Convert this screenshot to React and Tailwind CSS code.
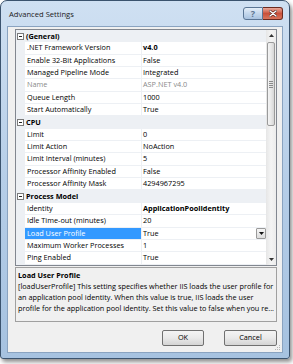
import React from 'react';

const groups = [
  {
    title: '(General)',
    rows: [
      { name: '.NET Framework Version', value: 'v4.0', bold: true },
      { name: 'Enable 32-Bit Applications', value: 'False' },
      { name: 'Managed Pipeline Mode', value: 'Integrated' },
      { name: 'Name', value: 'ASP.NET v4.0', readOnly: true },
      { name: 'Queue Length', value: '1000' },
      { name: 'Start Automatically', value: 'True' },
    ],
  },
  {
    title: 'CPU',
    rows: [
      { name: 'Limit', value: '0' },
      { name: 'Limit Action', value: 'NoAction' },
      { name: 'Limit Interval (minutes)', value: '5' },
      { name: 'Processor Affinity Enabled', value: 'False' },
      { name: 'Processor Affinity Mask', value: '4294967295' },
    ],
  },
  {
    title: 'Process Model',
    rows: [
      { name: 'Identity', value: 'ApplicationPoolIdentity', bold: true },
      { name: 'Idle Time-out (minutes)', value: '20' },
      { name: 'Load User Profile', value: 'True', selected: true },
      { name: 'Maximum Worker Processes', value: '1' },
      { name: 'Ping Enabled', value: 'True' },
    ],
  },
];

function CollapseBox() {
  return (
    <div className="flex h-[7px] w-[7px] items-center justify-center border border-[#7a7a7a] bg-white">
      <div className="h-px w-[3px] bg-[#222]" />
    </div>
  );
}

function CategoryRow({ title }) {
  return (
    <div className="flex h-[12.35px] items-center bg-[#edf0f4]">
      <div className="flex w-[9px] justify-center">
        <CollapseBox />
      </div>
      <span className="pl-[1px] font-bold text-black">{title}</span>
    </div>
  );
}

function PropertyRow({ row }) {
  const textColor = row.readOnly ? 'text-[#8a8a8a]' : 'text-black';
  return (
    <div className="flex h-[12.35px]">
      <div className="w-[9px] shrink-0 bg-[#edf0f4]" />
      <div
        className={
          row.selected
            ? 'flex w-[117px] shrink-0 items-center border-b border-r border-[#edf0f4] bg-[#3399ff] pl-[2px] text-white'
            : `flex w-[117px] shrink-0 items-center border-b border-r border-[#edf0f4] pl-[2px] ${textColor}`
        }
      >
        <span className="whitespace-nowrap">{row.name}</span>
      </div>
      <div className="flex min-w-0 flex-1 items-center border-b border-[#edf0f4] pl-[1px]">
        <span className={`whitespace-nowrap ${textColor} ${row.bold ? 'font-bold' : ''}`}>{row.value}</span>
        {row.selected && (
          <div className="ml-auto mr-[0px] flex h-[11px] w-[10px] items-center justify-center rounded-[1px] border border-[#9a9a9a] bg-gradient-to-b from-[#f6f6f6] to-[#dcdcdc]">
            <svg width="5" height="3" viewBox="0 0 5 3">
              <path d="M0 0h5L2.5 3z" fill="#111" />
            </svg>
          </div>
        )}
      </div>
    </div>
  );
}

function Scrollbar() {
  return (
    <div className="flex w-[10px] shrink-0 flex-col bg-gradient-to-r from-[#e6e6e6] via-[#f4f4f4] to-[#ececec]">
      <div className="flex h-[11px] items-center justify-center">
        <svg width="5" height="3" viewBox="0 0 5 3">
          <path d="M0 3h5L2.5 0z" fill="#333" />
        </svg>
      </div>
      <div className="flex-1">
        <div className="mx-[1px] mt-[1px] flex h-[84px] items-center justify-center rounded-[2px] border border-[#9a9a9a] bg-gradient-to-r from-[#f4f4f4] via-[#e8e8e8] to-[#d6d6d6]">
          <div className="flex flex-col gap-[1px]">
            <div className="h-px w-[4px] bg-[#8a8a8a]" />
            <div className="h-px w-[4px] bg-[#8a8a8a]" />
            <div className="h-px w-[4px] bg-[#8a8a8a]" />
            <div className="h-px w-[4px] bg-[#8a8a8a]" />
          </div>
        </div>
      </div>
      <div className="flex h-[11px] items-center justify-center">
        <svg width="5" height="3" viewBox="0 0 5 3">
          <path d="M0 0h5L2.5 3z" fill="#333" />
        </svg>
      </div>
    </div>
  );
}

function CaptionButtons() {
  return (
    <div className="mt-[6px] flex">
      <div className="flex h-[13px] w-[20px] items-center justify-center rounded-l-[3px] border border-[#5a7594] bg-gradient-to-b from-[#e4eef8] via-[#c4d7ec] to-[#a9c3e0]">
        <span className="text-[9px] leading-none font-bold text-[#5d7590]">?</span>
      </div>
      <div className="flex h-[13px] w-[20px] items-center justify-center rounded-r-[3px] border border-l-0 border-[#6b2a1f] bg-gradient-to-b from-[#e9a89a] via-[#c9503a] to-[#d8735b]">
        <svg width="8" height="7" viewBox="0 0 8 7">
          <path d="M1 1l6 5M7 1L1 6" stroke="#4a1a12" strokeWidth="2.6" strokeLinecap="round" />
          <path d="M1 1l6 5M7 1L1 6" stroke="#fff" strokeWidth="1.5" strokeLinecap="round" />
        </svg>
      </div>
    </div>
  );
}

function WinButton({ children, width }) {
  return (
    <button
      className={`flex h-[16px] ${width} items-center justify-center rounded-[2px] border border-[#707070] bg-gradient-to-b from-[#f4f4f4] via-[#e9e9e9] to-[#d4d4d4] text-black`}
    >
      {children}
    </button>
  );
}

export default function App() {
  return (
    <div className="min-h-screen bg-white font-['Open_Sans',sans-serif] text-[7.3px]">
      <div className="flex h-[359px] w-[290px] flex-col rounded-t-[7px] rounded-b-[3px] border border-[#3b536e] bg-gradient-to-b from-[#cfe0f2] via-[#b6cee8] to-[#a6c2e0] px-[6px] pb-[5px] shadow-[2px_3px_4px_rgba(0,0,0,0.45)]">
        <div className="flex h-[25px] items-start">
          <span className="mt-[7px] ml-[2px] text-[7.6px] leading-[12px] text-[#1a1a1a]">Advanced Settings</span>
          <div className="ml-auto">
            <CaptionButtons />
          </div>
        </div>

        <div className="relative flex flex-1 flex-col border border-[#8aa3c0] bg-[#f0f0f0]">
          <div className="mt-[2px] ml-[7px] flex w-[262px] border border-[#828790] bg-white leading-none">
            <div className="w-[250px]">
              {groups.map((g) => (
                <React.Fragment key={g.title}>
                  <CategoryRow title={g.title} />
                  {g.rows.map((r) => (
                    <PropertyRow key={r.name} row={r} />
                  ))}
                </React.Fragment>
              ))}
            </div>
            <Scrollbar />
          </div>

          <div className="mt-[1px] ml-[7px] h-[55px] w-[262px] border border-[#a0a0a0] px-[2px] pt-[2px] leading-[11px] text-black">
            <div className="font-bold">Load User Profile</div>
            <div className="whitespace-nowrap">[loadUserProfile] This setting specifies whether IIS loads the user profile for</div>
            <div className="whitespace-nowrap">an application pool identity. When this value is true, IIS loads the user</div>
            <div className="whitespace-nowrap">profile for the application pool identity. Set this value to false when you re...</div>
          </div>

          <div className="mt-[8px] ml-[7px] flex w-[262px] justify-end gap-[20px]">
            <WinButton width="w-[42px]">OK</WinButton>
            <WinButton width="w-[53px]">Cancel</WinButton>
          </div>

          <svg className="absolute right-[1px] bottom-[1px]" width="7" height="7" viewBox="0 0 7 7">
            <g fill="#b5b5b5">
              <rect x="5" y="1" width="1" height="1" />
              <rect x="3" y="3" width="1" height="1" />
              <rect x="5" y="3" width="1" height="1" />
              <rect x="1" y="5" width="1" height="1" />
              <rect x="3" y="5" width="1" height="1" />
              <rect x="5" y="5" width="1" height="1" />
            </g>
          </svg>
        </div>
      </div>
    </div>
  );
}
